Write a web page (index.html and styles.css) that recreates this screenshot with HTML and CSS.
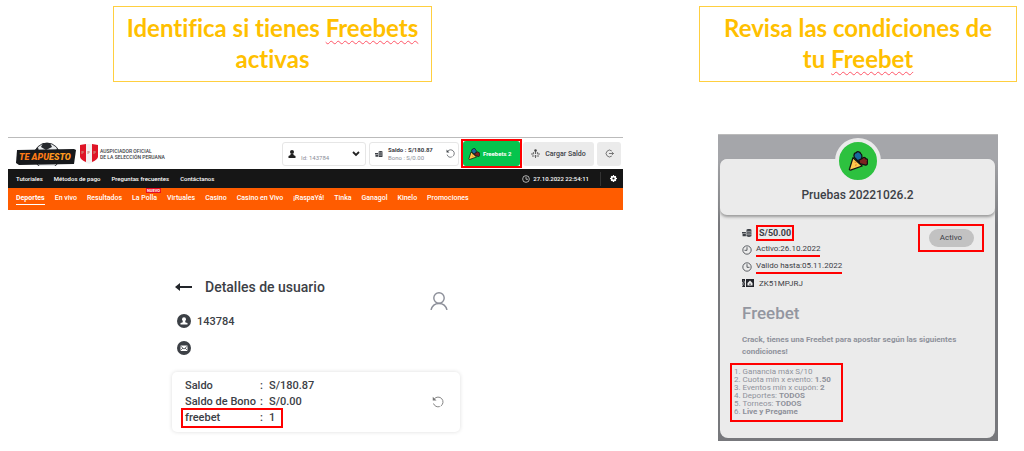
FILE: index.html
```html
<!DOCTYPE html>
<html lang="es">
<head>
<meta charset="utf-8">
<meta name="viewport" content="width=device-width, initial-scale=1">
<title>Freebets</title>
<link rel="stylesheet" href="styles.css">
</head>
<body>
<svg class="sprite" aria-hidden="true">
  <symbol id="party" viewBox="0 0 24 24">
    <path d="M9 9C6 7 7 2 10 2c1-2 5-1 5 1 2 1 2 4 1 7l-3 3z" fill="#176b9c" stroke="#111" stroke-width="1.500"/>
    <path d="M14 15l-1-4 4-2c1-2 4-2 4 0 3 0 3 3 2 4 1 2 0 4-2 4z" fill="#7d2220" stroke="#111" stroke-width="1.500"/>
    <path d="M6 8l11 10L3 23c-1 0-2-1-1-2z" fill="#ffc94d" stroke="#111" stroke-width="1.500" stroke-linejoin="round"/>
    <path d="M8 13l2 1M9 18l1-2" stroke="#e88b2e" stroke-width="1.5"/>
  </symbol>
  <symbol id="coins" viewBox="0 0 18 16">
    <path d="M0 6h7v3H0zM1 10h6v4H1z" fill="#3c4046"/>
    <path d="M8 2.500c0-2 9-2 9 0v11c0 2-9 2-9 0z" fill="#3c4046"/>
    <path d="M8 4.500c2 1 7 1 9 0M8 7.500c2 1 7 1 9 0M8 10.500c2 1 7 1 9 0" fill="none" stroke="#fff" stroke-width=".8"/>
  </symbol>
  <symbol id="reload" viewBox="0 0 16 16">
    <path d="M3 4a6.500 6.500 0 1 1-1 6" fill="none" stroke="currentColor" stroke-width="1.200" stroke-dasharray="22 1.500"/>
    <path d="M1 1v5h5z" fill="currentColor"/>
  </symbol>
  <symbol id="clock" viewBox="0 0 16 16">
    <circle cx="8" cy="8" r="6.700" fill="none" stroke="currentColor" stroke-width="1.300"/>
    <path d="M8 3.500V8.500h4" fill="none" stroke="currentColor" stroke-width="1.300"/>
  </symbol>
</svg>

<main class="page">
  <h1 class="caption caption-left">Identifica si tienes <span class="misspelled">Freebets</span> activas</h1>
  <h1 class="caption">Revisa las condiciones de tu <span class="misspelled">Freebet</span></h1>

  <section class="site">
    <header class="topbar">
      <a class="logo" href="#" aria-label="Te Apuesto">
        <svg class="logo-art" viewBox="0 0 60 24">
          <circle cx="31" cy="14" r="13" fill="#e9ebed" stroke="#34373b" stroke-width="1"/>
          <path d="M27 1l7 0 2 4-6 3-5-3zM18 9l4-4 1 5zM41 6l3 5-4-1z" fill="#26292d"/>
          <path d="M1 8l57-1 2 1-2 14-55 1-3-2z" fill="#17191c"/>
          <text class="logo-text" x="3" y="18"><tspan class="logo-te">TE APU</tspan><tspan>ESTO</tspan></text>
        </svg>
      </a>
      <svg class="crest" viewBox="0 0 18 20" aria-hidden="true">
        <path d="M0 1q9-2 18 0v12q-1 4-9 7-8-3-9-7z" fill="#f3f1f1"/>
        <path d="M0 1l6-1v18q-5-2-6-5zM12 0l6 1v12q-1 3-6 5z" fill="#df1526"/>
        <path d="M2 8h2M2 7v3M8 8h2M8 7v3M14 8h2M14 7v3" stroke="#c98b79"/>
      </svg>
      <p class="sponsor">AUSPICIADOR OFICIAL<br>DE LA SELECCIÓN PERUANA</p>
      <div class="actions">
        <button class="box user-box" type="button">
          <svg class="i8" viewBox="0 0 16 16"><circle cx="8" cy="4" r="4" fill="#222"/><path d="M5 8h6v2l4 2v4H1v-4l4-2z" fill="#222"/></svg>
          <span class="user-id">Id: 143784</span>
          <svg class="chevron" viewBox="0 0 8 6"><path d="M1 1l3 3 3-3" fill="none" stroke="#222" stroke-width="1.800"/></svg>
        </button>
        <div class="box balance-box">
          <svg class="i8"><use href="#coins"/></svg>
          <p class="balance"><b>Saldo : S/180.87</b><br>Bono : S/0.00</p>
          <button class="plain" type="button" aria-label="Actualizar"><svg class="i9"><use href="#reload"/></svg></button>
        </div>
        <div class="mark mark-freebets">
          <button class="freebets" type="button"><svg class="i12"><use href="#party"/></svg>Freebets 2</button>
        </div>
        <button class="grey load" type="button">
          <svg class="i9" viewBox="0 0 18 18"><path d="M9 4v6M9 12v6M0 10h5M13 10h5M2 14h5M11 14h5" fill="none" stroke="#444" stroke-width="1.600"/><circle cx="9" cy="3" r="2.500" fill="#444"/><circle cx="5" cy="8" r="1.500" fill="#444"/><circle cx="13" cy="8" r="1.500" fill="#444"/></svg>
          Cargar Saldo
        </button>
        <button class="grey exit" type="button" aria-label="Salir">
          <svg class="i9" viewBox="0 0 16 16"><path d="M12 3.500a6 6 0 1 0 0 9M7 8h8M12.500 5.500L15 8l-2.500 2.500" fill="none" stroke="#555" stroke-width="1.400"/></svg>
        </button>
      </div>
    </header>

    <nav class="darkbar" aria-label="Ayuda">
      <a href="#">Tutoriales</a><a href="#">Métodos de pago</a><a href="#">Preguntas frecuentes</a><a href="#">Contáctanos</a>
      <div class="now"><svg class="i8"><use href="#clock"/></svg><time>27.10.2022 22:54:11</time></div>
      <button class="plain gear" type="button" aria-label="Ajustes"><svg class="i7" viewBox="0 0 16 16"><circle cx="8" cy="8" r="4.500" fill="none" stroke="#fff" stroke-width="4"/><path d="M8 0v3M8 13v3M0 8h3M13 8h3M2.500 2.500l2 2M11.500 11.500l2 2M13.500 2.500l-2 2M4.500 11.500l-2 2" stroke="#fff" stroke-width="2.500"/></svg></button>
    </nav>

    <nav class="orangebar" aria-label="Principal">
      <a class="current" href="#">Deportes</a><a href="#">En vivo</a><a href="#">Resultados</a><a class="has-badge" href="#">La Polla<span class="badge">NUEVO</span></a><a href="#">Virtuales</a><a href="#">Casino</a><a href="#">Casino en Vivo</a><a href="#">¡RaspaYá!</a><a href="#">Tinka</a><a href="#">Ganagol</a><a href="#">Kinelo</a><a href="#">Promociones</a>
    </nav>

    <section class="details">
      <div class="profile">
        <div class="profile-main">
          <h2 class="details-title">
            <button class="plain" type="button" aria-label="Volver"><svg class="arrow" viewBox="0 0 17 8"><path d="M5 0v3h12v2H5v3L0 4z" fill="#22252a"/></svg></button>
            Detalles de usuario
          </h2>
          <p class="profile-row">
            <svg class="i14" viewBox="0 0 28 28"><circle cx="14" cy="14" r="14" fill="#3c4046"/><circle cx="14" cy="10.500" r="4" fill="#fff"/><path d="M12 13h4l1 4 4 1v3H7v-3l4-1z" fill="#fff"/></svg>
            143784
          </p>
          <p class="profile-row">
            <svg class="i14" viewBox="0 0 28 28"><circle cx="14" cy="14" r="14" fill="#3c4046"/><path d="M7 9h14v11H7z" fill="#fff"/><path d="M7 10l7 6 7-6M7 19l5-5M21 19l-5-5" fill="none" stroke="#3c4046" stroke-width="1.500"/></svg>
          </p>
        </div>
        <svg class="avatar" viewBox="0 0 18 18"><circle cx="9" cy="6" r="5.200" fill="none" stroke="#8b8e98" stroke-width="1.400"/><path d="M1 18c1-4 4-6.500 8-6.500s7 2.500 8 6.500" fill="none" stroke="#8b8e98" stroke-width="1.400"/></svg>
      </div>
      <div class="wallet">
        <dl class="amounts">
          <div class="amount"><dt>Saldo</dt><dd>S/180.87</dd></div>
          <div class="amount"><dt>Saldo de Bono</dt><dd>S/0.00</dd></div>
          <div class="amount marked"><dt>freebet</dt><dd>1</dd></div>
        </dl>
        <button class="plain" type="button" aria-label="Actualizar saldo"><svg class="i12 faded"><use href="#reload"/></svg></button>
      </div>
    </section>
  </section>

  <section class="modal">
    <div class="promo">
      <header class="promo-head">
        <span class="medal"><svg class="i20"><use href="#party"/></svg></span>
        <h2 class="promo-title">Pruebas 20221026.2</h2>
      </header>
      <div class="promo-body">
        <div class="facts">
          <ul class="fact-list">
            <li><svg class="i10"><use href="#coins"/></svg><b class="mark mark-amount">S/50.00</b></li>
            <li><svg class="i10 flip"><use href="#clock"/></svg><span class="underlined">Activo:26.10.2022</span></li>
            <li><svg class="i10"><use href="#clock"/></svg><span class="underlined">Valido hasta:05.11.2022</span></li>
            <li class="code"><svg class="ticket" viewBox="0 0 24 16"><path d="M0 0h6v16H0l2-4-2-2 2-2-2-3zM8 0h16v16H8z" fill="#22242a"/><path d="M11 8l5-5 5 5v5H11z" fill="#ebebeb"/><path d="M15 9h2v3h-2z" fill="#22242a"/><path d="M3 3l2 3-2 4 2 3" fill="none" stroke="#ebebeb"/></svg>ZK51MPJRJ</li>
          </ul>
          <div class="mark mark-status"><span class="status">Activo</span></div>
        </div>
        <h3 class="promo-kind">Freebet</h3>
        <p class="promo-intro">Crack, tienes una Freebet para apostar según las siguientes condiciones!</p>
        <ol class="mark terms">
          <li>Ganancia máx S/10</li>
          <li>Cuota mín x evento: <b>1.50</b></li>
          <li>Eventos mín x cupón: <b>2</b></li>
          <li>Deportes: <b>TODOS</b></li>
          <li>Torneos: <b>TODOS</b></li>
          <li><b>Live y Pregame</b></li>
        </ol>
      </div>
    </div>
  </section>
</main>
</body>
</html>
```
FILE: styles.css
```css
* { box-sizing: border-box; }
body { margin: 0; background: #fff; color: #3c4046; font-family: Roboto, "Liberation Sans", sans-serif; font-size: 8px; }
h1, h2, h3, p, ul, ol, dl, dd { margin: 0; padding: 0; }
ul, ol { list-style: none; }
a { color: inherit; text-decoration: none; }
button { font: inherit; color: inherit; border: 0; padding: 0; margin: 0; background: none; }
svg { display: block; flex: none; }
b { font-weight: 700; }
.sprite { position: absolute; width: 0; height: 0; }
.plain { display: flex; align-items: center; }
.i7 { width: 7px; height: 7px; }
.i8 { width: 8px; height: 8px; }
.i9 { width: 9px; height: 9px; }
.i10 { width: 10px; height: 10px; }
.i12 { width: 12px; height: 12px; }
.i14 { width: 14px; height: 14px; }
.i20 { width: 20px; height: 20px; }
.faded { color: #777; }
.flip { transform: scaleX(-1); }
.mark { border: 2px solid #f00; }

.page { display: grid; grid-template-columns: minmax(0, 1fr) 318px; column-gap: 76px; row-gap: 53px; align-items: start; padding: 6px 7px 10px 8px; }
.caption { border: 1px solid #ffcf40; padding: 5px 20px 7px; color: #ffc000; font: 700 24px/31px Lato, sans-serif; font-variant-ligatures: none; text-align: center; }
.caption-left { width: 319px; margin-left: 105px; padding-right: 5px; padding-left: 5px; }
.misspelled { text-decoration: underline wavy #f56 1px; text-underline-offset: 3px; text-decoration-skip-ink: none; }

.site { margin-top: 2px; border-top: 1px solid #bbb; }
.topbar { display: flex; align-items: center; height: 31px; padding: 0 2px 0 8px; }
.logo-art { width: 60px; height: 24px; }
.logo-text { font: italic 900 9px Roboto, sans-serif; fill: #ff9a1f; }
.logo-te { fill: #ff7b16; }
.crest { width: 18px; height: 20px; margin: 0 2px 0 4px; }
.sponsor { font-size: 5px; line-height: 6px; font-weight: 500; white-space: nowrap; }
.actions { display: flex; align-items: center; margin-left: auto; }
.box, .grey, .freebets { display: flex; align-items: center; height: 24px; border-radius: 3px; }
.box { border: 1px solid #e6e6e6; margin-right: 3px; }
.user-box { width: 84px; padding: 0 5px; }
.user-id { margin: 7px auto 0 5px; font-size: 6px; color: #8b8e98; }
.chevron { width: 8px; height: 6px; }
.balance-box { width: 90px; padding: 0 3px 0 5px; gap: 5px; margin-right: 2px; }
.balance-box .plain { margin-left: auto; }
.balance { font-size: 6px; line-height: 8px; color: #8b8e98; }
.balance b { color: #3c4046; }
.mark-freebets { margin-right: 1px; }
.freebets { width: 57px; padding: 0 5px; gap: 3px; background: #06c44d; color: #fff; font-size: 6px; font-weight: 700; white-space: nowrap; }
.mark-freebets .freebets { height: 25px; }
.grey { background: #ebebeb; justify-content: center; font-weight: 500; }
.load { width: 71px; gap: 5px; margin-right: 3px; font-size: 7px; }
.exit { width: 24px; }

.darkbar { display: flex; align-items: center; gap: 11px; height: 19px; padding: 0 6px 0 8px; background: #161616; color: #fff; font-size: 6px; font-weight: 500; }
.now { display: flex; align-items: center; gap: 3px; margin-left: auto; }
.gear { height: 14px; padding-left: 9px; border-left: 1px solid #333; }

.orangebar { display: flex; align-items: center; gap: 10px; height: 22px; padding: 0 8px; background: #ff5c00; color: #fff; font-size: 7px; font-weight: 500; white-space: nowrap; }
.orangebar a { line-height: 11px; border-bottom: 1px solid transparent; }
.orangebar .current { border-color: #fff; font-weight: 700; }
.has-badge { position: relative; }
.badge { position: absolute; top: -5px; right: -4px; padding: 0 1px; background: #e80c1c; font-size: 4px; line-height: 5px; font-weight: 700; }

.details { width: 288px; margin: 68px 0 0 164px; }
.profile { display: flex; justify-content: space-between; align-items: flex-start; padding: 0 12px 0 3px; }
.details-title { display: flex; align-items: center; gap: 13px; height: 18px; font-size: 14px; font-weight: 500; }
.arrow { width: 17px; height: 8px; }
.profile-row { display: flex; align-items: center; gap: 6px; height: 14px; margin: 18px 0 0 2px; font-size: 11px; font-weight: 500; }
.profile-row + .profile-row { margin-top: 13px; }
.avatar { width: 18px; height: 18px; margin-top: 14px; }
.wallet { display: flex; justify-content: space-between; align-items: center; margin-top: 17px; padding: 4px 16px 4px 9px; border-radius: 5px; box-shadow: 0 0 4px #ddd; font-size: 11px; font-weight: 500; }
.amount { display: flex; line-height: 16px; padding: 0 2px; border: 0 solid transparent; border-width: 0 2px; }
.amounts { padding: 2px 0; }
.amount dt { width: 75px; white-space: nowrap; }
.amount dd::before { content: ":"; display: inline-block; width: 9px; }
.amount.marked { width: 102px; margin: -2px 0; border: 2px solid #f00; }

.modal { width: 280px; margin: 0 auto; padding: 24px 3px 3px 2px; background: linear-gradient(#a5a6aa 0, #a5a6aa 24px, #77787c 90px, #77787c); border-top: 1px solid #bbb; }
.page .modal { margin-top: -1px; }
.promo { background: #ebebeb; border-radius: 8px; }
.promo-head { display: flex; flex-direction: column; align-items: center; height: 56px; border-radius: 7px; background: #ebebeb; box-shadow: 0 2px 3px #999; }
.medal { display: grid; place-items: center; width: 46px; height: 46px; margin-top: -21px; border: 4px solid #ebebeb; border-radius: 50%; background: #2dc13f; }
.promo-title { margin-top: 3px; font-size: 12px; line-height: 16px; font-weight: 500; }
.promo-body { padding: 9px 11px 16px 10px; }
.facts { display: flex; justify-content: space-between; align-items: flex-start; }
.fact-list { padding-left: 12px; font-size: 8px; }
.fact-list li { display: flex; align-items: center; gap: 4px; height: 17px; }
.fact-list .code { gap: 5px; height: 16px; }
.mark-amount { padding: 0 1px; font-size: 9px; line-height: 12px; }
.underlined { border-bottom: 2px solid #f00; line-height: 12px; }
.ticket { width: 12px; height: 8px; }
.mark-status { display: grid; place-items: center; width: 66px; height: 28px; }
.status { width: 45px; border-radius: 9px; background: #c2c2c2; line-height: 18px; text-align: center; }
.promo-kind { margin: 12px 0 0 12px; color: #9396a0; font-size: 17px; line-height: 20px; font-weight: 500; }
.promo-intro { margin: 11px 12px 5px; color: #8f929b; line-height: 12px; font-weight: 700; }
.terms { width: 113px; padding: 3px 2px 4px; color: #8f929b; line-height: 8px; list-style: decimal inside; white-space: nowrap; }
```
